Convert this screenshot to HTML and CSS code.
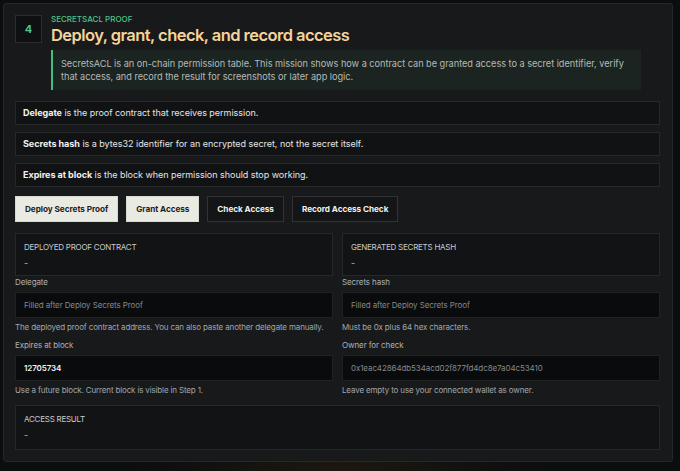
FILE: index.html
```html
<!DOCTYPE html>
<html lang="en">
<head>
    <meta charset="UTF-8">
    <meta name="viewport" content="width=device-width, initial-scale=1.0">
    <title>SecretsACL Proof</title>
    <link rel="stylesheet" href="styles.css">
</head>
<body>
    <section class="step-card">
        <div class="step-head">
            <div class="step-num">4</div>
            <div class="step-text">
                <p class="eyebrow">SecretsACL Proof</p>
                <h2>Deploy, grant, check, and record access</h2>
                <p class="callout">SecretsACL is an on-chain permission table. This mission shows how a contract can be granted access to a secret identifier, verify that access, and record the result for screenshots or later app logic.</p>
            </div>
        </div>

        <div class="notes">
            <div class="note"><b>Delegate</b> is the proof contract that receives permission.</div>
            <div class="note"><b>Secrets hash</b> is a bytes32 identifier for an encrypted secret, not the secret itself.</div>
            <div class="note"><b>Expires at block</b> is the block when permission should stop working.</div>
        </div>

        <div class="actions">
            <button class="btn btn-light">Deploy Secrets Proof</button>
            <button class="btn btn-light">Grant Access</button>
            <button class="btn">Check Access</button>
            <button class="btn">Record Access Check</button>
        </div>

        <div class="grid">
            <div class="stat">
                <span class="stat-label">Deployed proof contract</span>
                <span class="stat-value">-</span>
            </div>
            <div class="stat">
                <span class="stat-label">Generated secrets hash</span>
                <span class="stat-value">-</span>
            </div>

            <label class="field">
                <span class="field-label">Delegate</span>
                <input type="text" placeholder="Filled after Deploy Secrets Proof">
                <span class="hint">The deployed proof contract address. You can also paste another delegate manually.</span>
            </label>
            <label class="field">
                <span class="field-label">Secrets hash</span>
                <input type="text" placeholder="Filled after Deploy Secrets Proof">
                <span class="hint">Must be 0x plus 64 hex characters.</span>
            </label>

            <label class="field field-gap">
                <span class="field-label">Expires at block</span>
                <input type="text" value="12705734">
                <span class="hint">Use a future block. Current block is visible in Step 1.</span>
            </label>
            <label class="field field-gap">
                <span class="field-label">Owner for check</span>
                <input type="text" placeholder="0x1eac42864db534acd02f877fd4dc8e7a04c53410">
                <span class="hint">Leave empty to use your connected wallet as owner.</span>
            </label>
        </div>

        <div class="stat stat-wide">
            <span class="stat-label">Access result</span>
            <span class="stat-value">-</span>
        </div>
    </section>
</body>
</html>
```

FILE: styles.css
```css
*{
    margin: 0;
    padding: 0;
    box-sizing: border-box;
}
body{
    background: radial-gradient(ellipse at 50% 100%, #1c1710 0%, #0c0d0f 45%);
    background-color: #0c0d0f;
    font-family: Inter, "Noto Sans", sans-serif;
    color: #e6e7e8;
    height: 471px;
    overflow: hidden;
}
.step-card{
    margin: 3px;
    width: 670px;
    padding: 11px 12px 11px 11px;
    background: #18191b;
    border: 1px solid #25272a;
    border-radius: 3px;
}
.step-head{
    display: flex;
    gap: 9px;
}
.step-num{
    flex: none;
    width: 27px;
    height: 28px;
    display: flex;
    align-items: center;
    justify-content: center;
    background: #0f1011;
    border: 1px solid #2b2d30;
    color: #4cc38a;
    font-size: 11px;
    font-weight: 700;
}
.step-text{
    flex: 1;
}
.eyebrow{
    font-size: 8px;
    line-height: 10px;
    font-weight: 500;
    text-transform: uppercase;
    color: #4cc38a;
    margin-top: -1px;
}
.step-text h2{
    font-size: 16.5px;
    line-height: 22px;
    font-weight: 600;
    letter-spacing: -0.55px;
    color: #f3d49b;
}
.callout{
    width: 590px;
    margin-top: 4px;
    padding: 7px 8px;
    border-left: 2px solid #3fbf80;
    background: #1b2420;
    font-size: 9.2px;
    line-height: 13px;
    letter-spacing: -0.03px;
    color: #b5bab8;
}
.notes{
    display: flex;
    flex-direction: column;
    gap: 7px;
    margin-top: 11px;
}
.note{
    height: 24px;
    padding: 0 7px;
    background: #111214;
    border: 1px solid #26282a;
    font-size: 9px;
    line-height: 22px;
    letter-spacing: -0.03px;
    color: #e4e5e6;
}
.note b{
    font-weight: 700;
    color: #f2f2f2;
}
.actions{
    display: flex;
    gap: 8px;
    margin-top: 9px;
}
.btn{
    height: 26px;
    padding: 0 9px;
    font-family: inherit;
    font-size: 8.2px;
    font-weight: 700;
    letter-spacing: -0.05px;
    color: #f0f0f0;
    background: #141517;
    border: 1px solid #303235;
    cursor: pointer;
}
.btn-light{
    background: #e9eae2;
    border-color: #d8d9d0;
    color: #1c1d1e;
}
.grid{
    display: grid;
    grid-template-columns: 1fr 1fr;
    column-gap: 9px;
    margin-top: 11px;
}
.stat{
    height: 43px;
    padding: 8px;
    display: flex;
    flex-direction: column;
    gap: 6px;
    background: #121315;
    border: 1px solid #25272a;
}
.stat-label{
    font-size: 8px;
    line-height: 10px;
    letter-spacing: -0.25px;
    text-transform: uppercase;
    color: #c8cacc;
}
.stat-value{
    font-size: 9px;
    line-height: 10px;
    color: #4fae8a;
    font-weight: 700;
}
.field{
    display: flex;
    flex-direction: column;
    margin-top: 1px;
}
.field-gap{
    margin-top: 7px;
}
.field-label{
    font-size: 8px;
    line-height: 11px;
    letter-spacing: -0.1px;
    color: #aeb1b4;
}
.field input{
    margin-top: 4px;
    height: 26px;
    padding: 0 8px;
    background: #0a0b0c;
    border: 1px solid #1f2123;
    font-family: inherit;
    font-size: 8px;
    letter-spacing: -0.1px;
    color: #f2f2f2;
    font-weight: 600;
    outline: none;
}
.field input::placeholder{
    color: #85888b;
    font-weight: 400;
}
.hint{
    margin-top: 4px;
    font-size: 8px;
    line-height: 11px;
    letter-spacing: -0.15px;
    color: #a3a6a9;
}
.stat-wide{
    margin-top: 9px;
    height: 45px;
}
```
